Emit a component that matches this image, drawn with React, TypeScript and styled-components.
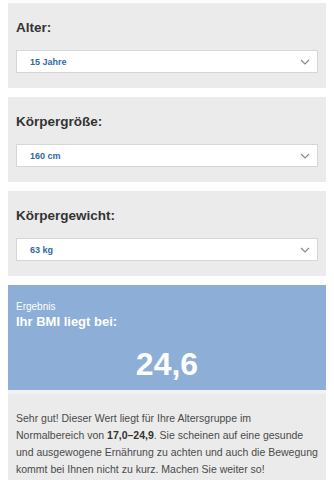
import styled, { createGlobalStyle } from "styled-components";

const GlobalStyle = createGlobalStyle`
  body {
    margin: 0;
    background: #ffffff;
    font-family: "Liberation Sans", Arial, sans-serif;
  }
`;

interface Field {
  label: string;
  value: string;
}

const fields: Field[] = [
  { label: "Alter:", value: "15 Jahre" },
  { label: "Körpergröße:", value: "160 cm" },
  { label: "Körpergewicht:", value: "63 kg" },
];

const Chevron = () => (
  <svg width="10" height="6" viewBox="0 0 10 6" fill="none">
    <path d="M1 1l4 4 4-4" stroke="#7a8a96" strokeWidth="1.1" />
  </svg>
);

const App = () => {
  return (
    <Page>
      <GlobalStyle />
      {fields.map((f) => (
        <Panel key={f.label}>
          <Label>{f.label}</Label>
          <Select>
            <span className="value">{f.value}</span>
            <Chevron />
          </Select>
        </Panel>
      ))}
      <Result>
        <ResultCard>
          <span className="caption">Ergebnis</span>
          <span className="title">Ihr BMI liegt bei:</span>
          <span className="bmi">24,6</span>
        </ResultCard>
        <Description>
          Sehr gut! Dieser Wert liegt für Ihre Altersgruppe im Normalbereich
          von <b>17,0–24,9</b>. Sie scheinen auf eine gesunde und ausgewogene
          Ernährung zu achten und auch die Bewegung kommt bei Ihnen nicht zu
          kurz. Machen Sie weiter so!
        </Description>
      </Result>
    </Page>
  );
};

const Page = styled.div`
  display: flex;
  flex-direction: column;
  gap: 9px;
  padding: 3px 8px 0;
`;

const Panel = styled.section`
  display: flex;
  flex-direction: column;
  gap: 14px;
  height: 85px;
  box-sizing: border-box;
  padding: 17px 8px 0;
  background: #ebebeb;
`;

const Label = styled.div`
  font-size: 13.5px;
  font-weight: bold;
  color: #333333;
  line-height: 16px;
`;

const Select = styled.div`
  display: flex;
  align-items: center;
  justify-content: space-between;
  height: 23px;
  box-sizing: border-box;
  padding: 0 7px 0 13px;
  background: #ffffff;
  border: 1px solid #d6d6d6;

  .value {
    font-size: 9px;
    font-weight: bold;
    color: #2f6aa3;
  }
`;

const Result = styled.div`
  display: flex;
  flex-direction: column;
`;

const ResultCard = styled.div`
  display: flex;
  flex-direction: column;
  height: 105px;
  box-sizing: border-box;
  padding: 16px 8px 0;
  background: #8caed7;
  color: #ffffff;

  .caption {
    font-size: 10px;
    line-height: 12px;
  }

  .title {
    font-size: 13px;
    font-weight: bold;
    line-height: 16px;
    margin-top: 1px;
  }

  .bmi {
    align-self: center;
    font-size: 32px;
    font-weight: bold;
    line-height: 36px;
    margin-top: 16px;
  }
`;

const Description = styled.p`
  margin: 0;
  padding: 16px 8px 14px;
  background: #ebebeb;
  border-top: 4px solid #f0f2f4;
  font-size: 10.5px;
  line-height: 17px;
  color: #4a4a4a;

  b {
    color: #333333;
  }
`;

export default App;
